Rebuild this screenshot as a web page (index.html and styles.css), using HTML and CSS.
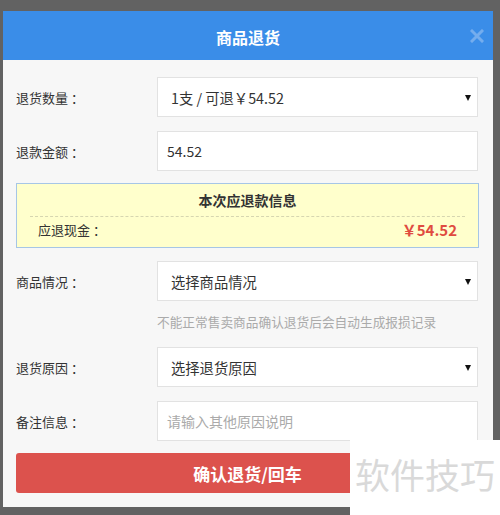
FILE: index.html
```html
<!DOCTYPE html>
<html>
  <head>
    <meta charset="utf-8">
    <link rel="stylesheet" href="styles.css">
  </head>
  <body>
    <div id="dialog">
      <div class="dlg-head">
        <span class="dlg-title">商品退货</span>
        <svg class="dlg-close" width="14" height="14" viewBox="0 0 14 14">
          <path d="M2 2 L12 12 M12 2 L2 12" stroke="#74adee" stroke-width="3" stroke-linecap="square"/>
        </svg>
      </div>
      <div class="dlg-body">
        <div class="row">
          <label class="lbl">退货数量 ：</label>
          <div class="field">
            <div class="select">1支 / 可退￥54.52</div>
          </div>
        </div>
        <div class="row">
          <label class="lbl">退款金额 ：</label>
          <div class="field">
            <input class="input" type="text" value="54.52">
          </div>
        </div>
        <div class="info">
          <div class="info-title">本次应退款信息</div>
          <div class="info-row">
            <span>应退现金 ：</span>
            <span class="money">￥54.52</span>
          </div>
        </div>
        <div class="row">
          <label class="lbl">商品情况 ：</label>
          <div class="field">
            <div class="select">选择商品情况</div>
            <div class="hint">不能正常售卖商品确认退货后会自动生成报损记录</div>
          </div>
        </div>
        <div class="row">
          <label class="lbl">退货原因 ：</label>
          <div class="field">
            <div class="select">选择退货原因</div>
          </div>
        </div>
        <div class="row">
          <label class="lbl">备注信息 ：</label>
          <div class="field">
            <input class="input" type="text" placeholder="请输入其他原因说明">
          </div>
        </div>
        <button class="btn-ok">确认退货/回车</button>
      </div>
    </div>
    <div class="watermark">软件技巧</div>
  </body>
</html>
```

FILE: styles.css
```css
html {
  height: 100%;
}
body {
  margin: 0;
  padding: 11px 7px 0 3px;
  height: 100%;
  box-sizing: border-box;
  background: #626262;
  font-family: "Noto Sans CJK SC", "Open Sans", sans-serif;
  color: #333;
  overflow: hidden;
}
#dialog {
  width: 490px;
  background: #f7f7f7;
}
.dlg-head {
  height: 49px;
  background: #3a8de8;
  display: flex;
  align-items: center;
  justify-content: center;
  position: relative;
}
.dlg-title {
  color: #fff;
  font-size: 16px;
  font-weight: bold;
  margin-top: 2px;
}
.dlg-close {
  position: absolute;
  right: 9px;
  top: 18px;
}
.dlg-body {
  padding: 17px 15px 14px 13px;
}
.row {
  display: flex;
  margin-bottom: 14px;
}
.lbl {
  width: 141px;
  height: 40px;
  display: flex;
  align-items: center;
  font-size: 13px;
  color: #333;
}
.field {
  flex: 1;
}
.select, .input {
  box-sizing: border-box;
  width: 100%;
  height: 40px;
  border: 1px solid #e2e2e2;
  background: #fff;
  font-family: inherit;
  font-size: 14px;
  color: #333;
  outline: none;
}
.select {
  position: relative;
  display: flex;
  align-items: center;
  padding-left: 13px;
  font-size: 14.3px;
}
.select::after {
  content: "";
  position: absolute;
  right: 6px;
  top: 17px;
  border-left: 3px solid transparent;
  border-right: 3px solid transparent;
  border-top: 6px solid #111;
}
.input {
  display: block;
  padding: 0 9px;
}
.input::placeholder {
  color: #aaa;
}
.hint {
  height: 32px;
  display: flex;
  align-items: center;
  padding-top: 8px;
  box-sizing: border-box;
  font-size: 12.7px;
  color: #aaa;
}
.info {
  margin: -2px 0 13px 0;
  width: 463px;
  box-sizing: border-box;
  border: 1px solid #a6c6e6;
  background: #ffffcc;
}
.info-title {
  margin: 0 13px;
  height: 33px;
  display: flex;
  align-items: center;
  justify-content: center;
  box-sizing: border-box;
  font-size: 14px;
  font-weight: bold;
  border-bottom: 1px dashed #d6d6b0;
}
.info-row {
  display: flex;
  align-items: center;
  justify-content: space-between;
  height: 30px;
  box-sizing: border-box;
  margin: 0 13px;
  padding: 0 8px 6px;
  font-size: 13px;
}
.money {
  color: #e04b40;
  font-size: 15px;
  font-weight: bold;
}
.btn-ok {
  display: block;
  width: 463px;
  height: 40px;
  margin: -2px 0 0 0;
  border: 0;
  border-radius: 3px;
  background: #dc524d;
  color: #fff;
  font-family: inherit;
  font-size: 17px;
  font-weight: bold;
}
.watermark {
  position: absolute;
  left: 350px;
  top: 440px;
  width: 150px;
  height: 75px;
  background: #fff;
  color: #d9d9d9;
  font-size: 35px;
  line-height: 68px;
  padding-left: 5px;
  box-sizing: border-box;
  white-space: nowrap;
}
```
